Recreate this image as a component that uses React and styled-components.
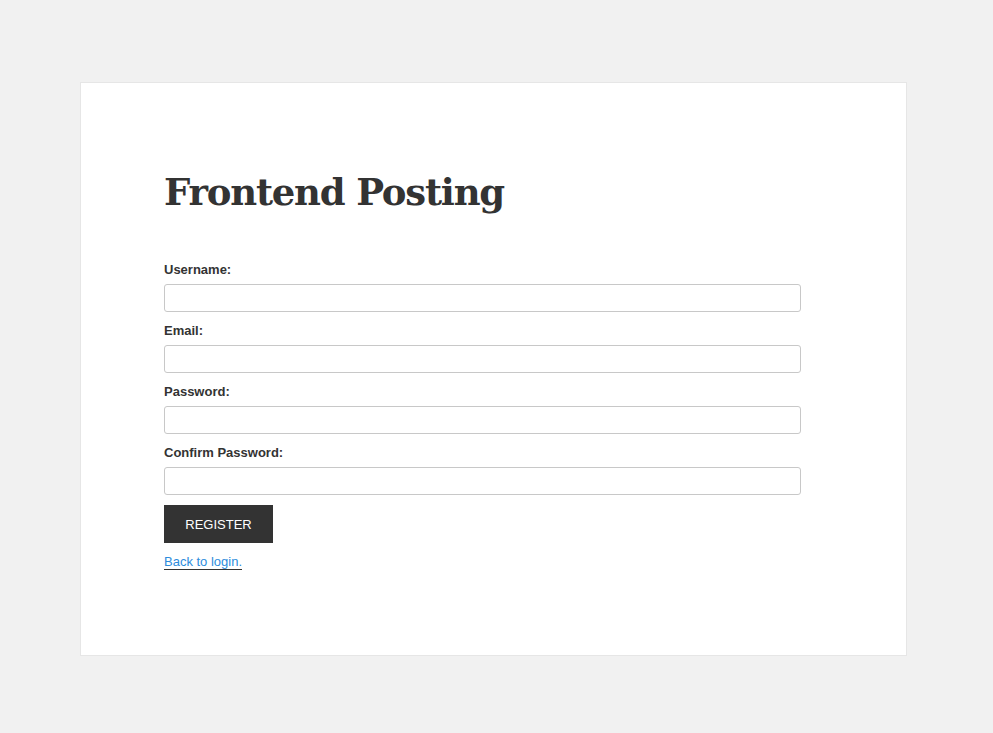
import React from "react";
import styled, { createGlobalStyle } from "styled-components";

const Global = createGlobalStyle`
  html, body { margin: 0; padding: 0; }
  body {
    background: #f1f1f1;
    font-family: "Liberation Sans", Arial, sans-serif;
    color: #333;
  }
  * { box-sizing: border-box; }
`;

const Page = styled.div`
  min-height: 733px;
  padding: 82px 0 0 80px;
`;

const Card = styled.main`
  width: 827px;
  height: 574px;
  background: #fff;
  border: 1px solid #e6e6e6;
  padding: 86px 83px 0;
`;

const Title = styled.h1`
  margin: 0 0 45px;
  font-family: "DejaVu Serif", "Liberation Serif", serif;
  font-weight: 700;
  font-size: 37px;
  letter-spacing: -1.2px;
  line-height: 46px;
  color: #333;
`;

const Form = styled.form`
  display: flex;
  flex-direction: column;
  width: 637px;
`;

const Field = styled.div`
  display: flex;
  flex-direction: column;
  gap: 4px;
  margin-bottom: 9px;
`;

const Label = styled.label`
  font-size: 13px;
  line-height: 20px;
  font-weight: 700;
  color: #333;
`;

const Input = styled.input`
  width: 100%;
  height: 28px;
  border: 1px solid #c8c8c8;
  border-radius: 3px;
  background: #fff;
  padding: 0 6px;
  font-family: inherit;
  font-size: 13px;
  outline: none;
`;

const Button = styled.button`
  align-self: flex-start;
  margin-top: 1px;
  width: 109px;
  height: 38px;
  padding: 0;
  border: none;
  background: #333;
  color: #fff;
  font-family: "Liberation Sans", Arial, sans-serif;
  font-size: 13px;
  text-transform: uppercase;
  cursor: pointer;
`;

const LinkLine = styled.p`
  margin: 9px 0 0;
  font-size: 13px;
  line-height: 20px;
`;

const BackLink = styled.a`
  color: #2d8cdc;
  text-decoration: none;
  border-bottom: 1px solid #333;
`;

const fields = [
  { id: "username", label: "Username:", type: "text" },
  { id: "email", label: "Email:", type: "email" },
  { id: "password", label: "Password:", type: "password" },
  { id: "confirm", label: "Confirm Password:", type: "password" },
];

export default function App() {
  return (
    <>
      <Global />
      <Page>
        <Card>
          <Title>Frontend Posting</Title>
          <Form onSubmit={(e) => e.preventDefault()}>
            {fields.map((f) => (
              <Field key={f.id}>
                <Label htmlFor={f.id}>{f.label}</Label>
                <Input id={f.id} type={f.type} />
              </Field>
            ))}
            <Button type="submit">Register</Button>
            <LinkLine>
              <BackLink href="#">Back to login.</BackLink>
            </LinkLine>
          </Form>
        </Card>
      </Page>
    </>
  );
}
